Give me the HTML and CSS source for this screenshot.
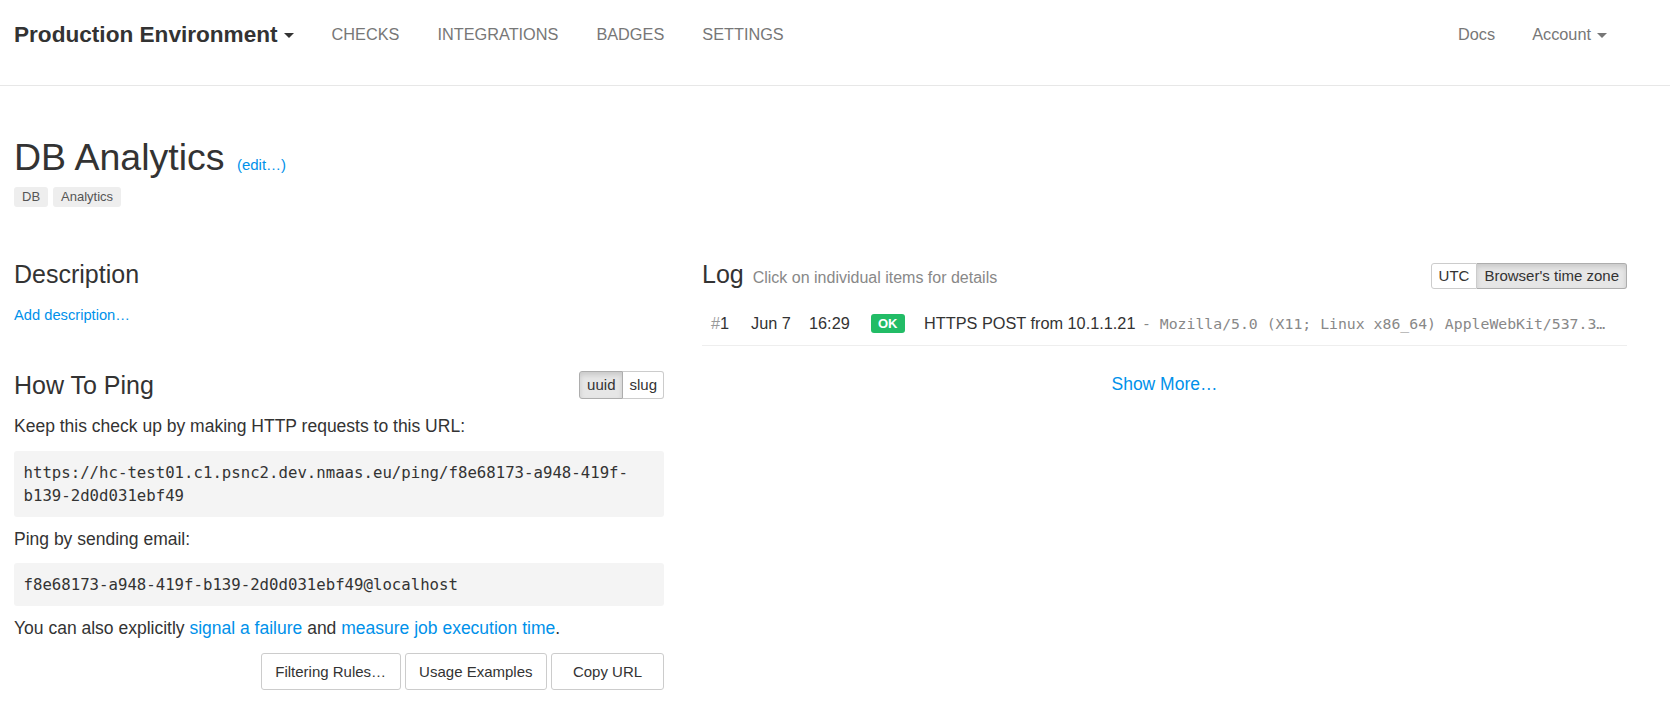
FILE: index.html
```html
<!DOCTYPE html>
<html>
<head>
<meta charset="utf-8">
<title>DB Analytics</title>
<link rel="stylesheet" href="styles.css">
</head>
<body>
<nav class="navbar">
  <div class="nav-left">
    <a class="brand">Production Environment <span class="caret"></span></a>
    <a class="nav-item">CHECKS</a>
    <a class="nav-item">INTEGRATIONS</a>
    <a class="nav-item">BADGES</a>
    <a class="nav-item">SETTINGS</a>
  </div>
  <div class="nav-right">
    <a class="nav-item cased">Docs</a>
    <a class="nav-item cased">Account <span class="caret gray"></span></a>
  </div>
</nav>

<main class="page">
  <div class="title-block">
    <h1 class="title">DB Analytics <a class="edit-link">(edit…)</a></h1>
    <div class="tags">
      <span class="tag">DB</span>
      <span class="tag">Analytics</span>
    </div>
  </div>

  <div class="columns">
    <section class="col-left">
      <h2 class="heading">Description</h2>
      <a class="add-desc">Add description…</a>

      <div class="ping-head">
        <h2 class="heading">How To Ping</h2>
        <div class="btn-group small">
          <span class="seg active">uuid</span><span class="seg">slug</span>
        </div>
      </div>
      <p class="para p-keep">Keep this check up by making HTTP requests to this URL:</p>
      <div class="code">https://hc-test01.c1.psnc2.dev.nmaas.eu/ping/f8e68173-a948-419f-b139-2d0d031ebf49</div>
      <p class="para p-email">Ping by sending email:</p>
      <div class="code">f8e68173-a948-419f-b139-2d0d031ebf49@localhost</div>
      <p class="para p-also">You can also explicitly <a class="link">signal a failure</a> and <a class="link">measure job execution time</a>.</p>
      <div class="actions">
        <span class="btn">Filtering Rules…</span>
        <span class="btn">Usage Examples</span>
        <span class="btn btn-copy">Copy URL</span>
      </div>
    </section>

    <section class="col-right">
      <div class="log-head">
        <h2 class="heading">Log <span class="hint">Click on individual items for details</span></h2>
        <div class="btn-group tz">
          <span class="seg">UTC</span><span class="seg active">Browser's time zone</span>
        </div>
      </div>
      <div class="log-row">
        <span class="c-n"><span class="hash">#</span>1</span>
        <span class="c-date">Jun 7</span>
        <span class="c-time">16:29</span>
        <span class="c-badge"><span class="ok">OK</span></span>
        <span class="c-details">HTTPS POST from 10.1.1.21 <span class="ua">- Mozilla/5.0 (X11; Linux x86_64) AppleWebKit/537.3…</span></span>
      </div>
      <div class="show-more"><a class="link">Show More…</a></div>
    </section>
  </div>
</main>
</body>
</html>
```

FILE: styles.css
```css
* { box-sizing: border-box; }

body {
  margin: 0;
  font-family: "Liberation Sans", Arial, Helvetica, sans-serif;
  font-size: 16px;
  line-height: 1.42857;
  color: #333;
  background: #fff;
}

a { text-decoration: none; }

.navbar {
  height: 86px;
  border-bottom: 1px solid #e7e7e7;
  display: flex;
  justify-content: space-between;
  align-items: flex-start;
  padding: 0 63px 0 14px;
}

.nav-left, .nav-right {
  display: flex;
  align-items: center;
  height: 70px;
}

.brand {
  font-size: 22.6px;
  font-weight: bold;
  color: #333;
  padding-right: 19px;
  display: flex;
  align-items: center;
}

.caret {
  display: inline-block;
  width: 0;
  height: 0;
  margin-left: 6px;
  margin-top: 2px;
  border-top: 5px solid #333;
  border-left: 5px solid transparent;
  border-right: 5px solid transparent;
}
.caret.gray { border-top-color: #777; margin-left: 6px; }

.nav-item {
  font-size: 16.3px;
  color: #777;
  padding: 0 19px;
  display: flex;
  align-items: center;
}
.nav-right .nav-item:first-child { padding-right: 18.5px; }
.nav-right .nav-item:last-child { padding-left: 18.5px; padding-right: 0; }

.page {
  padding: 0 14px;
}

.title {
  margin: 51px 0 0;
  font-size: 37.5px;
  font-weight: normal;
  line-height: 1.1;
}

.edit-link {
  font-size: 15px;
  color: #0091ea;
  margin-left: 2px;
}

.tags {
  display: flex;
  gap: 5px;
  margin-top: 9px;
}

.tag {
  font-size: 13px;
  line-height: 20px;
  height: 20px;
  padding: 0 8px;
  background: #eee;
  color: #555;
  border-radius: 3px;
}

.columns {
  display: flex;
  gap: 38px;
  margin-top: 54px;
}

.col-left { width: 650px; }
.col-right { width: 925px; }

.heading {
  margin: 0;
  font-size: 25px;
  font-weight: normal;
  line-height: 26px;
}

.add-desc {
  display: block;
  margin-top: 18px;
  font-size: 14.7px;
  line-height: 20px;
  color: #0091ea;
}

.ping-head {
  display: flex;
  justify-content: space-between;
  align-items: center;
  margin-top: 46px;
}

.btn-group {
  display: flex;
}

.seg {
  display: block;
  border: 1px solid #ccc;
  background: #fff;
  color: #333;
}
.seg + .seg { border-left: none; }
.seg:first-child { border-radius: 3px 0 0 3px; }
.seg:last-child { border-radius: 0 3px 3px 0; }
.seg.active {
  background: #e6e6e6;
  border-color: #adadad;
  box-shadow: inset 0 3px 5px rgba(0,0,0,0.125);
}

.small .seg {
  font-size: 15px;
  height: 28px;
  line-height: 26px;
  padding: 0 6px;
}
.small .seg.active { padding: 0 7px; }

.tz .seg {
  font-size: 15px;
  height: 26px;
  line-height: 24px;
  padding: 0 7px;
}

.para { margin: 0; font-size: 17.5px; line-height: 23px; }
.p-keep { margin-top: 16px; }
.p-email { margin-top: 11px; }
.p-also { margin-top: 11px; }

.code {
  margin-top: 13px;
  background: #f4f4f4;
  border-radius: 3px;
  padding: 10px 9.5px;
  font-family: "DejaVu Sans Mono", "Liberation Mono", monospace;
  font-size: 15.7px;
  line-height: 23px;
  color: #333;
}
.p-email + .code { margin-top: 12px; }

.link { color: #0091ea; }

.actions {
  display: flex;
  justify-content: flex-end;
  gap: 4px;
  margin-top: 13px;
}

.btn {
  display: block;
  height: 37px;
  line-height: 35px;
  padding: 0 13.5px;
  font-size: 15px;
  border: 1px solid #ccc;
  border-radius: 3px;
  background: #fff;
  color: #333;
  text-align: center;
}
.btn-copy { min-width: 113px; }

.log-head {
  display: flex;
  justify-content: space-between;
  align-items: center;
}

.hint {
  font-size: 16px;
  color: #888;
  margin-left: 2px;
}

.log-row {
  display: flex;
  align-items: center;
  height: 45px;
  margin-top: 10px;
  border-bottom: 1px solid #eee;
  font-size: 16.3px;
  white-space: nowrap;
}

.c-n { width: 49px; padding-left: 9px; flex: none; }
.hash { color: #999; }
.c-date { width: 58px; flex: none; }
.c-time { width: 62px; flex: none; }
.c-badge { width: 53px; flex: none; display: flex; align-items: center; }
.ok {
  display: inline-block;
  background: #22bc66;
  color: #fff;
  font-size: 13px;
  font-weight: bold;
  line-height: 19px;
  height: 19px;
  padding: 0 7px;
  border-radius: 3px;
}
.c-details {
  flex: 1;
  min-width: 0;
  overflow: hidden;
}
.ua {
  font-family: "DejaVu Sans Mono", "Liberation Mono", monospace;
  font-size: 14.8px;
  color: #888;
  margin-left: 2px;
}

.show-more {
  text-align: center;
  margin-top: 26px;
  font-size: 17.5px;
  line-height: 25px;
}
```
